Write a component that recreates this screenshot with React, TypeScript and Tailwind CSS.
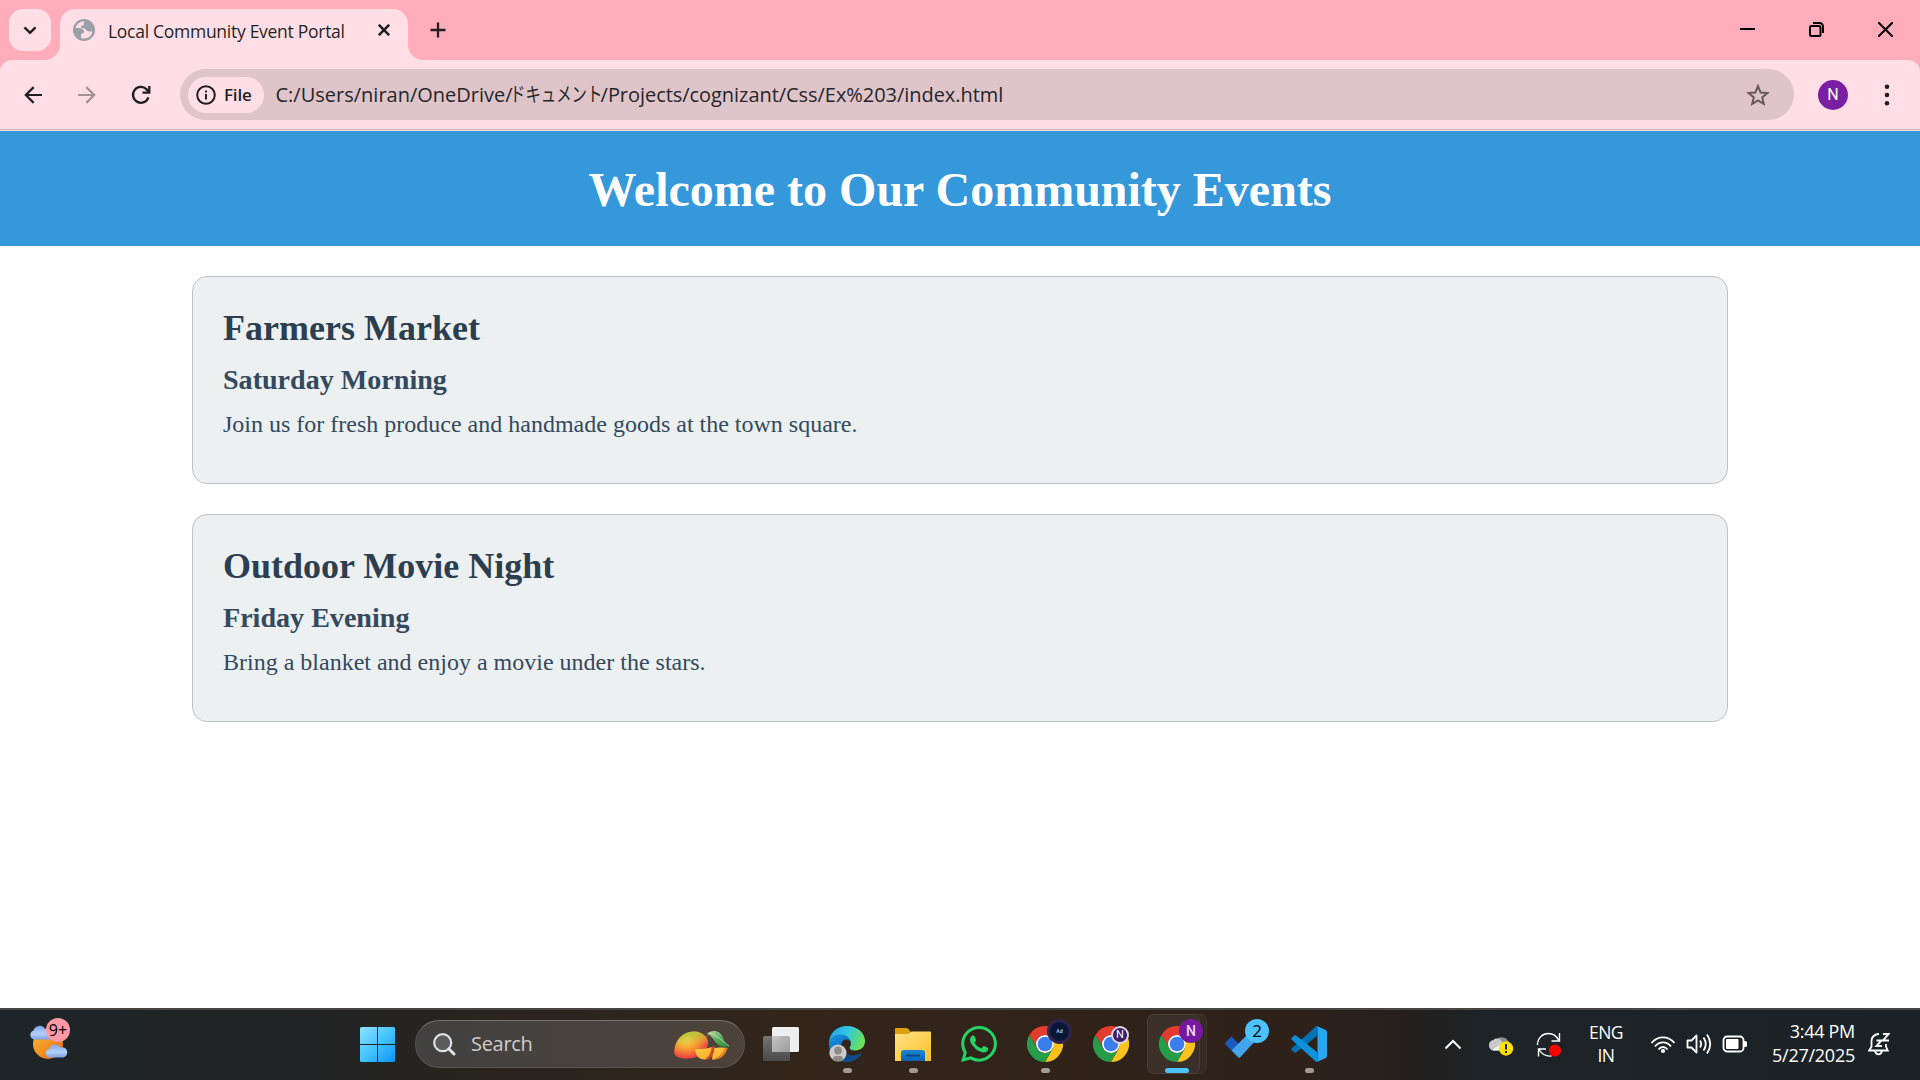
import type { ReactNode } from "react";

const uiFont = "font-['Open_Sans','Noto_Sans_CJK_JP',sans-serif]";

function TabStrip() {
  return (
    <div className="flex h-[60px] items-start bg-[#ffadba] text-[#1f1f1f]">
      <button className="ml-[9px] mt-[9px] flex size-[42px] items-center justify-center rounded-[14px] bg-[#ffdfe5]">
        <svg width="14" height="9" viewBox="0 0 14 9" fill="none" stroke="#1f1f1f" strokeWidth="2.5">
          <path d="M1.5 1.3 7 6.8l5.500-5.500" />
        </svg>
      </button>
      <svg className="-ml-[6px] mt-[45px]" width="15" height="15" viewBox="0 0 15 15" fill="#ffdfe5">
        <path d="M15 0v15H0C8 15 15 8 15 0Z" />
      </svg>
      <div className="mt-[9px] flex h-[51px] w-[348px] items-center rounded-t-[15px] bg-[#ffdfe5] pl-[13px]">
        <svg className="mb-[9px] shrink-0" width="22" height="22" viewBox="0 0 22 22">
          <circle cx="11" cy="11" r="11" fill="#99a0a7" />
          <path
            d="M12 2.500H9.500C6 3 3.300 5.500 2.500 9c3.700 0 6.500.3 8 2 1.200 1.400.8 3.300-1.300 3.600-1.300.2-1.200 1.500-1.200 2.900v1.500c4 1.500 8.300-.2 10.300-3.500.5-1 .9-2 1-3.300-3 .5-5.300.3-6-1.200-.8-1.700-2.700-1.500-4.300-1.700-1.500-.3-1.500-2.400 0-2.600 1.800-.2 2.300-.9 1.700-2.100-.4-.8.300-1.400 1.300-2.100Z"
            fill="#ffdfe5"
          />
        </svg>
        <span className="mb-[7px] ml-[13px] w-[238px] shrink-0 whitespace-nowrap text-[17.5px] tracking-[-0.280px]">
          Local Community Event Portal
        </span>
        <svg className="mb-[9px] ml-[32px] shrink-0" width="12" height="12" viewBox="0 0 12 12" stroke="#1f1f1f" strokeWidth="2.600">
          <path d="m.8.8 10.400 10.400M11.200.8.8 11.200" />
        </svg>
      </div>
      <svg className="mt-[45px]" width="15" height="15" viewBox="0 0 15 15" fill="#ffdfe5">
        <path d="M0 0v15h15C7 15 0 8 0 0Z" />
      </svg>
      <svg className="ml-[7px] mt-[22px]" width="16" height="16" viewBox="0 0 16 16" stroke="#1f1f1f" strokeWidth="2.300">
        <path d="M8 .5v15M.5 8h15" />
      </svg>
      <div className="ml-auto mr-[27px] mt-[22px] flex gap-[54px]">
        <svg width="15" height="15" viewBox="0 0 15 15" stroke="#000" strokeWidth="2">
          <path d="M0 7h15" />
        </svg>
        <svg width="15" height="15" viewBox="0 0 15 15" fill="none" stroke="#000" strokeWidth="2">
          <rect x="1" y="4" width="10.500" height="10" rx="1.500" />
          <path d="M4 1h6.500A3.500 3.500 0 0 1 14 4.500V11" />
        </svg>
        <svg width="15" height="15" viewBox="0 0 15 15" stroke="#000" strokeWidth="2">
          <path d="m.3.300 14.400 14.400M14.700.300.3 14.700" />
        </svg>
      </div>
    </div>
  );
}

function Toolbar() {
  return (
    <div className="bg-[#ffadba]">
      <div className="flex h-[69px] items-center rounded-t-[12px] bg-[#ffdfe5]">
        <svg className="ml-[24px]" width="18" height="18" viewBox="0 0 18 18" fill="none" stroke="#1f1f1f" strokeWidth="2.200">
          <path d="M18 9H2M9.700 1.100 1.800 9l7.900 7.900" />
        </svg>
        <svg className="ml-[36px]" width="18" height="18" viewBox="0 0 18 18" fill="none" stroke="#a58f94" strokeWidth="2.200">
          <path d="M0 9h16M8.300 1.100 16.200 9l-7.900 7.900" />
        </svg>
        <svg className="ml-[35px]" width="20" height="20" viewBox="0 0 20 20" fill="none" stroke="#1f1f1f" strokeWidth="2.300">
          <path d="M17.400 12.300A7.900 7.900 0 1 1 15.600 4.400L18 7" />
          <path d="M18.300 1v6.700h-6.800" />
        </svg>
        <div className="ml-[29px] flex h-[51px] w-[1614px] items-center rounded-full bg-[#dfc4c9] pl-[8px]">
          <div className="flex h-[36px] w-[76px] items-center rounded-full bg-[#ffdfe5] pl-[7.500px]">
            <svg width="20" height="20" viewBox="0 0 20 20" fill="none" stroke="#1f1f1f" strokeWidth="2">
              <circle cx="10" cy="10" r="8.800" />
              <path d="M10 9v5.500M10 5.500v2" />
            </svg>
            <span className="ml-[8.500px] text-[17px] font-semibold leading-[24px] tracking-[-0.2px] text-[#1f1f1f]">File</span>
          </div>
          <div className="ml-[11.500px] flex items-baseline whitespace-nowrap text-[20px] leading-[30px] text-[#26262a]">
            <span>C:/Users/niran/OneDrive/</span>
            <span className="-ml-[3px] inline-block w-[91px] origin-left scale-x-[0.77]">ドキュメント</span>
            <span className="tracking-[-0.050px]">/Projects/cognizant/Css/Ex%203/index.html</span>
          </div>
          <svg className="ml-auto mr-[24px]" width="24" height="24" viewBox="0 0 24 24" fill="none" stroke="#66595d" strokeWidth="2">
            <path d="m12 3.200 2.600 6.300 6.800.5-5.200 4.400 1.600 6.600L12 17.500 6.200 21l1.600-6.600L2.600 10l6.800-.5Z" />
          </svg>
        </div>
        <div className="ml-[24px] flex size-[30px] items-center justify-center rounded-full bg-[#7b1fa2] font-[Roboto,sans-serif] text-[16px] text-white">
          N
        </div>
        <svg className="ml-[36px]" width="6" height="22" viewBox="0 0 6 22" fill="#1f1f1f">
          <circle cx="3" cy="2.700" r="2.300" />
          <circle cx="3" cy="11" r="2.300" />
          <circle cx="3" cy="19.300" r="2.300" />
        </svg>
      </div>
      <div className="h-px bg-[#ccb2b7]" />
      <div className="h-px bg-[#ffdfe5]" />
    </div>
  );
}

function EventCard({ title, when, text }: { title: string; when: string; text: string }) {
  return (
    <section className="mx-[192px] mb-[30px] h-[208px] rounded-[15px] border border-[#bdc3c7] bg-[#ecf0f1] px-[30px] pt-[31px]">
      <h2 className="mb-[15px] text-[36px] font-bold leading-[41px] text-[#2c3e50]">{title}</h2>
      <h3 className="mb-[15px] text-[28.080px] font-bold leading-[32px] text-[#34495e]">{when}</h3>
      <p className="text-[24px] leading-[27px] text-[#34495e]">{text}</p>
    </section>
  );
}

function Page() {
  return (
    <main className="h-[877px] bg-white font-['Liberation_Serif',serif]">
      <header className="h-[115px] bg-[#3498db] pt-[31px]">
        <h1 className="text-center text-[48px] font-bold leading-[55px] text-white">Welcome to Our Community Events</h1>
      </header>
      <div className="pt-[30px]">
        <EventCard
          title="Farmers Market"
          when="Saturday Morning"
          text="Join us for fresh produce and handmade goods at the town square."
        />
        <EventCard title="Outdoor Movie Night" when="Friday Evening" text="Bring a blanket and enjoy a movie under the stars." />
      </div>
    </main>
  );
}

function Weather() {
  return (
    <div className="relative">
      <svg width="44" height="44" viewBox="0 0 44 44">
        <defs>
          <linearGradient id="sun" x1="0" y1="0" x2="1" y2="1">
            <stop offset="0" stopColor="#f7bd3c" />
            <stop offset=".6" stopColor="#f08a1d" />
            <stop offset="1" stopColor="#e2600f" />
          </linearGradient>
          <linearGradient id="cloud" x1="0" y1="0" x2="0" y2="1">
            <stop offset="0" stopColor="#7fa6ea" />
            <stop offset=".6" stopColor="#b4d0fb" />
            <stop offset="1" stopColor="#7f9fe2" />
          </linearGradient>
        </defs>
        <circle cx="19" cy="27" r="15" fill="url(#sun)" />
        <path d="M5 22.500a4.700 4.700 0 0 1-.5-9A6.300 6.300 0 0 1 16 12a5 5 0 0 1 7 10.500Z" fill="url(#cloud)" />
        <path d="M20 40.500a4.400 4.400 0 0 1 .2-8.500 6.200 6.200 0 0 1 11.300-1.600 5.200 5.200 0 0 1 3 10.100Z" fill="url(#cloud)" />
      </svg>
      <div className="absolute left-[17px] top-[1px] flex size-[24px] items-center justify-center rounded-full bg-[#ff99a4] pb-px text-[16px] text-black">
        9+
      </div>
    </div>
  );
}

function WindowsLogo() {
  return (
    <svg className="mb-[1px]" width="35" height="35" viewBox="0 0 35 35">
      <defs>
        <linearGradient id="win" x1="0" y1="0" x2="1" y2="1">
          <stop offset="0" stopColor="#8fe2ff" />
          <stop offset=".5" stopColor="#45c4fd" />
          <stop offset="1" stopColor="#0a93fb" />
        </linearGradient>
      </defs>
      <path
        fill="url(#win)"
        d="M1.500 0H17v17H0V1.500Q0 0 1.500 0ZM18 0h15.500Q35 0 35 1.500V17H18ZM0 18h17v17H1.500Q0 35 0 33.500ZM18 18h17v15.500q0 1.500-1.500 1.500H18Z"
      />
    </svg>
  );
}

function Mango() {
  return (
    <svg width="58" height="32" viewBox="0 0 58 32">
      <defs>
        <radialGradient id="mango" cx=".35" cy=".3" r=".85">
          <stop offset="0" stopColor="#ffe257" />
          <stop offset=".4" stopColor="#f9a02f" />
          <stop offset=".75" stopColor="#ee4c42" />
          <stop offset="1" stopColor="#d92d50" />
        </radialGradient>
        <linearGradient id="mangoTop" x1=".3" y1="0" x2=".5" y2="1">
          <stop offset="0" stopColor="#a9c93b" />
          <stop offset=".35" stopColor="#c3c53c" stopOpacity=".5" />
          <stop offset=".6" stopColor="#f4902f" stopOpacity="0" />
        </linearGradient>
        <linearGradient id="leaf" x1="0" y1="0" x2="1" y2="1">
          <stop offset="0" stopColor="#b7d9b0" />
          <stop offset=".5" stopColor="#5aa957" />
          <stop offset="1" stopColor="#0e8a35" />
        </linearGradient>
        <linearGradient id="slice" x1="0" y1="0" x2="1" y2="1">
          <stop offset="0" stopColor="#ffd149" />
          <stop offset="1" stopColor="#fba51c" />
        </linearGradient>
      </defs>
      <path d="M14 28.500C5 28.500.5 26.500 1.200 20.500 2.500 10 10 1.500 20.500 1.500S36.500 9 35 15c-1.700 7.500-10 13.500-21 13.500Z" fill="url(#mango)" />
      <path d="M14 28.500C5 28.500.5 26.500 1.200 20.500 2.500 10 10 1.500 20.500 1.500S36.500 9 35 15c-1.700 7.500-10 13.500-21 13.500Z" fill="url(#mangoTop)" />
      <path d="M33 7c2-.5 2.500-1.500 2-4.500" fill="none" stroke="#a3531d" strokeWidth="1.800" />
      <path d="M34.500 3.500C40-1 47.500 1 50 7c1.500 5 3 8 7 9.500-7 1.500-12-.5-15-5-2.500-3.600-4-5.500-7.500-8Z" fill="url(#leaf)" />
      <path d="M37 3.500c7 1.500 11 7 19 12.500" fill="none" stroke="#d7ecd0" strokeWidth=".7" />
      <path d="M39 29.500c8 .5 13.500-4 15.500-11.500-4-.8-10-.7-14 .5Z" fill="url(#slice)" />
      <path d="M22.300 19c5 .5 13-.5 19-2.500C42 23 38.500 29.500 31.500 29.500 26 29.500 22.500 25.500 22.300 19Z" fill="url(#slice)" />
      <path d="M41.300 16.500C42 23 38.500 29.500 31.500 29.500c4-2 6.800-7 7-12.300Z" fill="#d8432b" />
      <path d="M54.500 18c-2 7.500-7.500 12-15.500 11.500 6-1.500 11-5.500 13.500-11.800Z" fill="#e07a1d" />
    </svg>
  );
}

function SearchBox() {
  return (
    <div className="mb-[2px] ml-[20px] flex h-[48px] w-[330px] items-center rounded-full border border-[#5c5550] border-t-[#74706c] bg-linear-to-r from-[#414140] to-[#4d423a] pl-[17px]">
      <svg width="23" height="23" viewBox="0 0 23 23" fill="none" stroke="#dfe2e8" strokeLinecap="round">
        <circle cx="9.700" cy="9.700" r="8.500" strokeWidth="2.200" fill="#5b5b5b" />
        <path d="m16 16 5 5" strokeWidth="3" />
      </svg>
      <span className="ml-[15px] text-[20px] tracking-[-0.300px] text-[#cfcbc8]">Search</span>
      <div className="ml-auto mr-[13px] mt-[3px]">
        <Mango />
      </div>
    </div>
  );
}

function Dock({ children, running, badge }: { children: ReactNode; running?: boolean; badge?: ReactNode }) {
  return (
    <div className="relative flex h-[70px] w-[66px] items-center justify-center">
      <div className="mb-[2px] size-[36px]">{children}</div>
      {badge}
      {running && <div className="absolute bottom-[7px] left-[29px] h-[5px] w-[9px] rounded-full bg-[#a09a95]" />}
    </div>
  );
}

function TaskView() {
  return (
    <svg width="36" height="36" viewBox="0 0 36 36">
      <defs>
        <linearGradient id="tvBack" x1="0" y1="0" x2="0" y2="1">
          <stop offset="0" stopColor="#757575" />
          <stop offset="1" stopColor="#4a4a4a" />
        </linearGradient>
        <linearGradient id="tvMid" x1="0" y1="0" x2="1" y2="1">
          <stop offset="0" stopColor="#c6c6c6" />
          <stop offset="1" stopColor="#9a9a9a" />
        </linearGradient>
      </defs>
      <rect y="10" width="27" height="25" rx="1.500" fill="url(#tvBack)" />
      <rect x="9" y="1" width="27" height="25" rx="1.500" fill="#efefef" />
      <path d="M9 10h16.500q1.500 0 1.500 1.500V26H10.500Q9 26 9 24.500Z" fill="url(#tvMid)" />
    </svg>
  );
}

function Edge() {
  return (
    <svg width="36" height="36" viewBox="0 0 36 36">
      <defs>
        <linearGradient id="edgeTop" x1="0" y1=".3" x2="1" y2=".6">
          <stop offset="0" stopColor="#25a5e8" />
          <stop offset=".45" stopColor="#32c6e0" />
          <stop offset="1" stopColor="#6de54e" />
        </linearGradient>
        <linearGradient id="edgeMid" x1="0" y1="0" x2=".6" y2="1">
          <stop offset="0" stopColor="#1595e2" />
          <stop offset="1" stopColor="#0a5cad" />
        </linearGradient>
      </defs>
      <path
        d="M0 17C0 7 8 0 18 0c10.500 0 18 7 18 15 0 6-4.500 9.500-9.500 9.500-4 0-6-1.500-6-2.800 0-.9 1.500-1.600 1.500-4.200 0-3.500-3.500-6.500-8.500-6.500C6.500 11 1.500 14 0 17Z"
        fill="url(#edgeTop)"
      />
      <path d="M0 18c0-6 5-9.500 11.500-9.500 6 0 10.500 4 10.500 9 0-2.500-2.500-4-5-4-3.500 0-6.500 5-4.500 11 1.500 5 6 10 10.500 10.700C10 38 0 30 0 18Z" fill="url(#edgeMid)" />
      <path d="M12.300 21c.5 4.500 6 9.300 13 8.300 3.500-.5 5.500-2 7.800-2.700C31 32 25 36 18.500 36 13 35 10.500 27 12.300 21Z" fill="#114a8b" />
      <circle cx="9" cy="27" r="8.600" fill="#cdcac7" />
      <circle cx="9" cy="24.500" r="3.900" fill="#8d8a88" />
      <path d="M3.500 33.200a5.600 4.300 0 0 1 11 0A8.600 8.600 0 0 1 3.500 33.200Z" fill="#8d8a88" />
    </svg>
  );
}

function Folder() {
  return (
    <svg width="36" height="36" viewBox="0 0 36 36">
      <defs>
        <linearGradient id="folder" x1="0" y1="0" x2="1" y2="1">
          <stop offset="0" stopColor="#ffe383" />
          <stop offset="1" stopColor="#fcbf2c" />
        </linearGradient>
        <linearGradient id="tray" x1="0" y1="0" x2="0" y2="1">
          <stop offset="0" stopColor="#1b86d6" />
          <stop offset="1" stopColor="#0b62b4" />
        </linearGradient>
      </defs>
      <path d="M0 3q0-1 1-1h10.500q1 0 2 1l2 2.500L12 9H0Z" fill="#dd9f0c" />
      <path d="M0 8h11.500q1.500 0 2.500-1t2.500-1.500H35q1 0 1 1V35H0Z" fill="url(#folder)" />
      <path d="M6 35v-8q0-3 3-3h18q3 0 3 3v8Z" fill="url(#tray)" />
      <path d="M11 29.500h14" stroke="#0a4a85" strokeWidth="2" />
    </svg>
  );
}

function WhatsApp() {
  return (
    <svg width="36" height="36" viewBox="0 0 24 24" fill="#25d366">
      <path d="M17.472 14.382c-.297-.149-1.758-.867-2.030-.967-.273-.099-.471-.148-.670.150-.197.297-.767.966-.940 1.164-.173.199-.347.223-.644.075-.297-.150-1.255-.463-2.390-1.475-.883-.788-1.480-1.761-1.653-2.059-.173-.297-.018-.458.130-.606.134-.133.298-.347.446-.520.149-.174.198-.298.298-.497.099-.198.050-.371-.025-.520-.075-.149-.669-1.612-.916-2.207-.242-.579-.487-.500-.669-.510-.173-.008-.371-.010-.570-.010-.198 0-.520.074-.792.372-.272.297-1.040 1.016-1.040 2.479 0 1.462 1.065 2.875 1.213 3.074.149.198 2.096 3.200 5.077 4.487.709.306 1.262.489 1.694.625.712.227 1.360.195 1.871.118.571-.085 1.758-.719 2.006-1.413.248-.694.248-1.289.173-1.413-.074-.124-.272-.198-.570-.347m-5.421 7.403h-.004a9.870 9.870 0 0 1-5.031-1.378l-.361-.214-3.741.982.998-3.648-.235-.374a9.860 9.860 0 0 1-1.510-5.260c.001-5.450 4.436-9.884 9.888-9.884 2.640 0 5.122 1.030 6.988 2.898a9.825 9.825 0 0 1 2.893 6.994c-.003 5.450-4.437 9.884-9.885 9.884m8.413-18.297A11.815 11.815 0 0 0 12.050 0C5.495 0 .160 5.335.157 11.892c0 2.096.547 4.142 1.588 5.945L.057 24l6.305-1.654a11.882 11.882 0 0 0 5.683 1.448h.005c6.554 0 11.890-5.335 11.893-11.893a11.821 11.821 0 0 0-3.480-8.413Z" />
    </svg>
  );
}

function Chrome() {
  return (
    <svg width="36" height="36" viewBox="0 0 36 36">
      <path d="M2.400 9A18 18 0 0 1 33.600 9H18a9 9 0 0 0-7.800 13.500Z" fill="#e33b2e" />
      <path d="M33.600 9A18 18 0 0 1 18 36l7.800-13.500A9 9 0 0 0 18 9Z" fill="#fcc31e" />
      <path d="M18 36A18 18 0 0 1 2.400 9l7.800 13.500a9 9 0 0 0 15.600 0Z" fill="#269e49" />
      <circle cx="18" cy="18" r="9" fill="#fff" />
      <circle cx="18" cy="18" r="7.300" fill="#3b7ded" />
    </svg>
  );
}

function Todo() {
  return (
    <svg width="36" height="36" viewBox="0 0 36 36">
      <path d="M.5 18.500q-1-1 0-2l5-5q1-1 2 0l6.500 6.500-7 7Z" fill="#185abd" />
      <path d="M6.500 24.500 25.500 5.500l7 7L15.200 31.300q-1 1-2 0Z" fill="#41a5ee" />
    </svg>
  );
}

function VsCode() {
  return (
    <svg width="36" height="36" viewBox="0 0 36 36">
      <path d="M26.500.3 26 10 5 26.500q-.8.600-1.600-.1L.8 24.200q-1-1 0-2L24.500.8q.9-.8 2-.5Z" fill="#0072b5" />
      <path d="M26.500 35.700 26 26 5 9.500q-.8-.6-1.600.1L.8 11.800q-1 1 0 2l23.700 21.400q.9.800 2 .5Z" fill="#0d93dc" />
      <path d="M26.300 35.700c-1 .4-1.500.1-2-.2 1 .6 2.200 0 2.200-1.300V1.800c0-1.300-1.200-1.900-2.200-1.300.5-.4 1-.6 2-.2l8 3.500Q36 4.500 36 6v24q0 1.500-1.700 2.200Z" fill="#26a8f2" />
    </svg>
  );
}

function Apps() {
  return (
    <div className="ml-[3px] flex">
      <Dock>
        <TaskView />
      </Dock>
      <Dock running>
        <Edge />
      </Dock>
      <Dock running>
        <Folder />
      </Dock>
      <Dock>
        <WhatsApp />
      </Dock>
      <Dock
        running
        badge={
          <div className="absolute left-[35px] top-[9px] flex size-[25px] items-center justify-center rounded-full border-[3px] border-[#33234d] bg-[#081736] text-[5px] font-bold text-[#aebfd6]">
            Ad
          </div>
        }
      >
        <Chrome />
      </Dock>
      <Dock
        badge={
          <div className="absolute left-[33px] top-[16px] flex size-[18px] items-center justify-center rounded-full border-2 border-[#ddd5e6] bg-[#3c1d68] font-[Roboto,sans-serif] text-[11px] text-white">
            N
          </div>
        }
      >
        <Chrome />
      </Dock>
      <div className="relative">
        <div className="absolute left-[10px] top-[4px] h-[60px] w-[53px] rounded-[7px] border border-[#40342d] bg-[#362a23]" />
        <div className="absolute left-[3px] top-[4px] h-[60px] w-[53px] rounded-[7px] border border-[#4b3e37] bg-[#3b2f29]" />
        <Dock
          badge={
            <div className="absolute left-[35px] top-[9px] flex size-[24px] items-center justify-center rounded-full bg-[#7719a0] font-[Roboto,sans-serif] text-[14px] font-medium text-[#ecd5f5]">
              N
            </div>
          }
        >
          <Chrome />
        </Dock>
        <div className="absolute bottom-[7px] left-[21px] h-[5px] w-[24px] rounded-full bg-[#4cc2ff]" />
      </div>
      <Dock
        badge={
          <div className="absolute left-[35px] top-[9px] flex size-[24px] items-center justify-center rounded-full bg-[#4cc2ff] pb-px text-[17px] text-black">
            2
          </div>
        }
      >
        <Todo />
      </Dock>
      <Dock running>
        <VsCode />
      </Dock>
    </div>
  );
}

function Tray() {
  return (
    <div className="ml-[102px] flex h-[70px] items-center pb-[2px] text-[17.500px] text-white">
      <svg width="18" height="11" viewBox="0 0 18 11" fill="none" stroke="#fff" strokeWidth="2">
        <path d="m1.500 9.500 7.500-7.500 7.500 7.500" />
      </svg>
      <svg className="ml-[26px] mt-[2px]" width="26" height="22" viewBox="0 0 26 22">
        <path d="M7 7a7.500 7.500 0 0 1 13.500 1l-3 8Z" fill="#8c8c8c" />
        <path d="M5.500 16.500a5.300 5.300 0 0 1 0-10.500c1.500-2 6-2 8 1l4 9.500Z" fill="#c9c9c9" />
        <path d="m4 16 8-5 5 5.500H5.500Z" fill="#f4f4f4" />
        <circle cx="18" cy="14.500" r="7.200" fill="#fce100" />
        <path d="M18 10v5.500M18 17v2" stroke="#222" strokeWidth="2" />
      </svg>
      <svg className="ml-[22px]" width="26" height="25" viewBox="0 0 26 25" fill="none" stroke="#fff" strokeWidth="1.400">
        <path d="M1.500 13C1.500 6 6.500 1.500 12.500 1.500c4.500 0 8 2.500 10 6.500M23.500 1v8h-8" />
        <path d="M10 17H2.500v7.500M3 17.500c3 5 7.500 7 12.500 6.500" />
        <circle cx="19" cy="18.500" r="6.100" fill="#f00" stroke="none" />
      </svg>
      <div className="ml-[21px] w-[46px] pb-px text-center leading-[23px]">
        <div className="tracking-[-0.600px]">ENG</div>
        <div className="tracking-[-0.600px]">IN</div>
      </div>
      <svg className="ml-[21px]" width="26" height="19" viewBox="0 0 26 19" fill="none" stroke="#fff" strokeWidth="1.900">
        <path d="M1.500 8c6.500-7.500 16.500-7.500 23 0M5 11.500c4.500-5.500 11.500-5.500 16 0M8.500 14.500c2.500-3.300 6.500-3.300 9 0" />
        <circle cx="13" cy="16" r="2.100" fill="#fff" stroke="none" />
      </svg>
      <svg className="ml-[10px]" width="26" height="22" viewBox="0 0 26 22" fill="none" stroke="#fff" strokeWidth="1.800">
        <path d="M1.500 7.500h4l5-5v17l-5-5h-4Z" strokeLinejoin="round" />
        <path d="M14 7.500q2.200 3.500 0 7M17.500 4.500q4.500 6.500 0 13M21 1.500q6.500 9.500 0 19" />
      </svg>
      <svg className="ml-[10px]" width="26" height="18" viewBox="0 0 26 18" fill="none" stroke="#fff" strokeWidth="1.800">
        <rect x="1.500" y="1.500" width="20" height="15" rx="3.500" />
        <rect x="4" y="4" width="12.500" height="10" rx="1" fill="#fff" stroke="none" />
        <path d="M22 6h1.500q1.500 0 1.500 1.500v3q0 1.500-1.500 1.500H22Z" fill="#fff" stroke="none" />
      </svg>
      <div className="w-[107px] pb-[2px] text-right text-[18px] leading-[24px]">
        <div className="tracking-[-0.300px]">3:44 PM</div>
        <div className="tracking-[-0.250px]">5/27/2025</div>
      </div>
      <svg className="ml-[13px]" width="22" height="24" viewBox="0 0 22 24" fill="none" stroke="#fff" strokeWidth="1.800">
        <path d="M11 2C6.500 2 3.500 5 3.500 9v5.500L1.200 18.500h18.600L18 14.500V12M7 19q.8 3.300 3.500 3.300T14 19" />
        <path d="M8.500 8.500h5l-5 5.500h5.500M15 2h5.500L15 8.500h6" strokeWidth="1.900" />
      </svg>
    </div>
  );
}

function Taskbar() {
  return (
    <footer className="flex h-[72px] items-center border-t-2 border-[#464542] bg-[linear-gradient(90deg,#1e2528_0%,#222424_17%,#272420_23%,#33251a_42%,#2f2219_58%,#2e211a_68%,#231f1e_74%,#1d2326_77%,#1b2226_100%)]">
      <div className="w-[360px] pb-[12px] pl-[29px]">
        <Weather />
      </div>
      <WindowsLogo />
      <SearchBox />
      <Apps />
      <Tray />
    </footer>
  );
}

export default function App() {
  return (
    <div className={`h-[1080px] w-[1920px] overflow-hidden ${uiFont}`}>
      <TabStrip />
      <Toolbar />
      <Page />
      <Taskbar />
    </div>
  );
}
